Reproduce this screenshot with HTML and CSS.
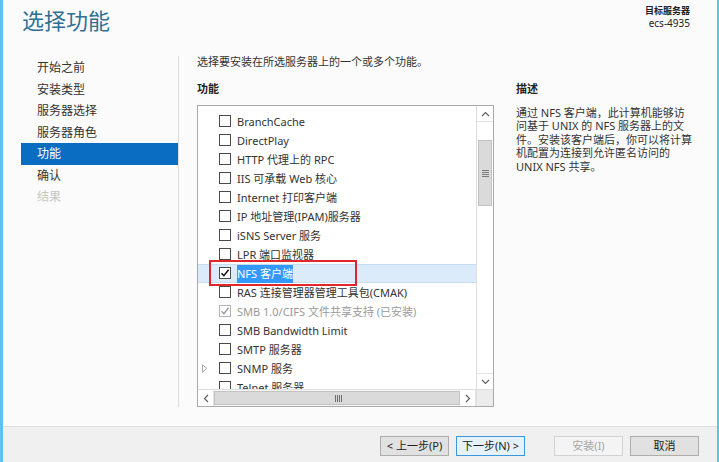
FILE: index.html
```html
<!DOCTYPE html>
<html lang="zh-CN">
<head>
<meta charset="utf-8">
<title>选择功能</title>
<link rel="stylesheet" href="styles.css">
</head>
<body>
<div class="window">
  <header class="header">
    <h1 class="title">选择功能</h1>
    <div class="target">
      <div class="target-label">目标服务器</div>
      <div class="target-name">ecs-4935</div>
    </div>
  </header>

  <div class="body">
    <nav class="nav">
      <div class="nav-item">开始之前</div>
      <div class="nav-item">安装类型</div>
      <div class="nav-item">服务器选择</div>
      <div class="nav-item">服务器角色</div>
      <div class="nav-item active">功能</div>
      <div class="nav-item">确认</div>
      <div class="nav-item disabled">结果</div>
    </nav>

    <main class="main">
      <p class="intro">选择要安装在所选服务器上的一个或多个功能。</p>
      <div class="columns">
        <div class="col-label">功能</div>
        <div class="col-label">描述</div>

        <div class="listbox">
          <div class="list-area">
            <div class="rows">
              <div class="row"><span class="exp"></span><span class="cb"></span><span class="lbl">BranchCache</span></div>
              <div class="row"><span class="exp"></span><span class="cb"></span><span class="lbl">DirectPlay</span></div>
              <div class="row"><span class="exp"></span><span class="cb"></span><span class="lbl">HTTP 代理上的 RPC</span></div>
              <div class="row"><span class="exp"></span><span class="cb"></span><span class="lbl">IIS 可承载 Web 核心</span></div>
              <div class="row"><span class="exp"></span><span class="cb"></span><span class="lbl">Internet 打印客户端</span></div>
              <div class="row"><span class="exp"></span><span class="cb"></span><span class="lbl">IP 地址管理(IPAM)服务器</span></div>
              <div class="row"><span class="exp"></span><span class="cb"></span><span class="lbl">iSNS Server 服务</span></div>
              <div class="row"><span class="exp"></span><span class="cb"></span><span class="lbl">LPR 端口监视器</span></div>
              <div class="row selected">
                <span class="exp"></span>
                <span class="cb"><svg width="10" height="10" viewBox="0 0 10 10"><path d="M1.5 5.2 L3.9 7.7 L8.6 1.8" fill="none" stroke="#111" stroke-width="1.5"/></svg></span>
                <span class="lbl"><span class="sel-text">NFS 客户端</span></span>
                <span class="redbox"></span>
              </div>
              <div class="row"><span class="exp"></span><span class="cb"></span><span class="lbl">RAS 连接管理器管理工具包(CMAK)</span></div>
              <div class="row installed">
                <span class="exp"></span>
                <span class="cb"><svg width="10" height="10" viewBox="0 0 10 10"><path d="M1.5 5.2 L3.9 7.7 L8.6 1.8" fill="none" stroke="#9a9a9a" stroke-width="1.4"/></svg></span>
                <span class="lbl">SMB 1.0/CIFS 文件共享支持 (已安装)</span>
              </div>
              <div class="row"><span class="exp"></span><span class="cb"></span><span class="lbl">SMB Bandwidth Limit</span></div>
              <div class="row"><span class="exp"></span><span class="cb"></span><span class="lbl">SMTP 服务器</span></div>
              <div class="row">
                <span class="exp"><svg width="6" height="9" viewBox="0 0 6 9"><path d="M0.5 0.8 L4.8 4.5 L0.5 8.2 Z" fill="none" stroke="#a8a8a8" stroke-width="1"/></svg></span>
                <span class="cb"></span><span class="lbl">SNMP 服务</span>
              </div>
              <div class="row"><span class="exp"></span><span class="cb"></span><span class="lbl">Telnet 服务器</span></div>
            </div>
            <div class="vscroll">
              <div class="sbtn"><svg width="9" height="6" viewBox="0 0 9 6"><path d="M1 5 L4.5 1.5 L8 5" fill="none" stroke="#606060" stroke-width="1.2"/></svg></div>
              <div class="vtrack">
                <div class="vthumb"><span class="grip-h"></span></div>
              </div>
              <div class="sbtn"><svg width="9" height="6" viewBox="0 0 9 6"><path d="M1 1 L4.5 4.5 L8 1" fill="none" stroke="#606060" stroke-width="1.2"/></svg></div>
            </div>
          </div>
          <div class="hscroll">
            <div class="sbtn h"><svg width="6" height="9" viewBox="0 0 6 9"><path d="M5 1 L1.5 4.5 L5 8" fill="none" stroke="#606060" stroke-width="1.2"/></svg></div>
            <div class="hthumb"><span class="grip-v"></span></div>
            <div class="sbtn h"><svg width="6" height="9" viewBox="0 0 6 9"><path d="M1 1 L4.5 4.5 L1 8" fill="none" stroke="#606060" stroke-width="1.2"/></svg></div>
            <div class="corner"></div>
          </div>
        </div>

        <div class="desc">通过 NFS 客户端，此计算机能够访<br>问基于 UNIX 的 NFS 服务器上的文<br>件。安装该客户端后，你可以将计算<br>机配置为连接到允许匿名访问的<br>UNIX NFS 共享。</div>
      </div>
    </main>
  </div>

  <footer class="footer">
    <button class="btn">&lt; 上一步(P)</button>
    <button class="btn focused">下一步(N) &gt;</button>
    <button class="btn disabled wide-gap">安装(I)</button>
    <button class="btn">取消</button>
  </footer>
</div>
</body>
</html>
```
FILE: styles.css
```css
* { box-sizing: border-box; }

html, body {
  margin: 0;
  padding: 0;
}

body {
  font-family: "Noto Sans", "Noto Sans CJK SC", sans-serif;
  color: #333;
  background: #fbfbfb;
}

.window {
  width: 719px;
  height: 462px;
  display: flex;
  flex-direction: column;
  border-left: 3px solid #5cc3ec;
  border-right: 2px solid #5cc3ec;
  background: #fbfbfb;
  overflow: hidden;
}

/* header */
.header {
  height: 56px;
  flex: none;
  display: flex;
  justify-content: space-between;
  align-items: flex-start;
  padding: 0 27px 0 19px;
}

.title {
  margin: 5px 0 0;
  font-family: "Noto Sans CJK SC", sans-serif;
  font-weight: 400;
  font-size: 22px;
  line-height: 28px;
  color: #2f7093;
}

.target {
  margin-top: 5px;
  text-align: right;
  color: #222;
}

.target-label {
  font-family: "Noto Sans CJK SC", sans-serif;
  font-size: 9px;
  font-weight: 700;
  line-height: 12px;
}

.target-name {
  font-size: 10px;
  line-height: 12px;
}

/* body */
.body {
  flex: 1;
  display: flex;
  padding-bottom: 19px;
}

.nav {
  width: 176px;
  flex: none;
  border-right: 1px solid #dcdcdc;
  padding-top: 1px;
  padding-left: 18px;
}

.nav-item {
  height: 21.5px;
  line-height: 21.5px;
  padding-left: 16px;
  font-size: 12px;
  color: #333;
}

.nav-item.active {
  background: #0a6dc2;
  color: #fff;
}

.nav-item.disabled {
  color: #c6c6c6;
}

.main {
  flex: 1;
  padding-left: 18px;
}

.intro {
  margin: 0;
  font-size: 11px;
  line-height: 12px;
  color: #333;
}

.columns {
  margin-top: 15px;
  display: grid;
  grid-template-columns: 297px 190px;
  grid-template-rows: 12px auto;
  column-gap: 22px;
  row-gap: 10px;
}

.col-label {
  font-size: 11px;
  font-weight: 700;
  line-height: 12px;
  color: #222;
}

/* list box */
.listbox {
  height: 302px;
  border: 1px solid #a9a9a9;
  background: #fff;
  display: flex;
  flex-direction: column;
}

.list-area {
  flex: 1;
  display: flex;
  min-height: 0;
}

.rows {
  flex: 1;
  padding-top: 5.5px;
  overflow: hidden;
}

.row {
  position: relative;
  height: 19px;
  display: flex;
  align-items: center;
  padding-left: 3px;
  font-size: 11px;
  color: #333;
  white-space: nowrap;
}

.exp {
  width: 18px;
  flex: none;
  display: flex;
  align-items: center;
  padding-left: 1px;
}

.cb {
  width: 12px;
  height: 12px;
  flex: none;
  border: 1px solid #4a4a4a;
  background: #fff;
  display: flex;
  align-items: center;
  justify-content: center;
}

.lbl {
  margin-left: 6px;
}

.row.selected {
  background: #dcebfa;
  border-top: 1px solid #c4ddf5;
  border-bottom: 1px solid #c4ddf5;
}

.sel-text {
  background: #3399ff;
  color: #fff;
  padding: 1px 0 2px;
}

.redbox {
  position: absolute;
  left: 11px;
  top: -5px;
  width: 148px;
  height: 26px;
  border: 2px solid #e3262b;
  pointer-events: none;
}

.row.installed {
  color: #9a9a9a;
}

.row.installed .cb {
  border-color: #b4b4b4;
}

/* scrollbars */
.vscroll {
  width: 17px;
  flex: none;
  display: flex;
  flex-direction: column;
  background: #f6f6f6;
  border-left: 1px solid #dedede;
}

.sbtn {
  height: 16px;
  flex: none;
  display: flex;
  align-items: center;
  justify-content: center;
  background: #fff;
  border-bottom: 1px solid #e4e4e4;
}

.vscroll .sbtn:last-child {
  border-bottom: none;
  border-top: 1px solid #e4e4e4;
}

.vtrack {
  flex: 1;
  padding-top: 18px;
  background: #fff;
}

.vthumb {
  height: 66px;
  margin: 0 1px;
  background: #dadada;
  border: 1px solid #c2c2c2;
  display: flex;
  align-items: center;
  justify-content: center;
}

.grip-h {
  width: 7px;
  height: 7px;
  background: repeating-linear-gradient(to bottom, #7a7a7a 0 1px, transparent 1px 2px);
}

.hscroll {
  height: 17px;
  flex: none;
  display: flex;
  border-top: 1px solid #dedede;
  background: #f6f6f6;
}

.sbtn.h {
  width: 16px;
  height: auto;
  border-bottom: none;
  border-right: 1px solid #e4e4e4;
}

.hthumb {
  flex: 1;
  margin: 1px 0;
  background: #dadada;
  border: 1px solid #c2c2c2;
  display: flex;
  align-items: center;
  justify-content: center;
}

.grip-v {
  width: 7px;
  height: 7px;
  margin-left: 2px;
  background: repeating-linear-gradient(to right, #6e6e6e 0 1px, transparent 1px 2px);
}

.corner {
  width: 17px;
  flex: none;
  background: #ececec;
  border-left: 1px solid #dedede;
}

/* description */
.desc {
  margin-top: 1px;
  font-size: 11px;
  line-height: 13.4px;
  color: #333;
  white-space: nowrap;
}

/* footer */
.footer {
  height: 36px;
  flex: none;
  background: #f0f0f0;
  border-top: 1px solid #dfdfdf;
  display: flex;
  justify-content: flex-end;
  align-items: flex-start;
  gap: 7px;
  padding: 9px 18px 0 0;
}

.btn {
  width: 69px;
  height: 20px;
  padding: 0;
  font-family: "Noto Sans", "Noto Sans CJK SC", sans-serif;
  font-size: 11px;
  line-height: 18px;
  color: #222;
  background: #e1e1e1;
  border: 1px solid #adadad;
}

.btn.focused {
  background: #e5f1fb;
  border-color: #3c97de;
}

.btn.disabled {
  background: #f4f4f4;
  border-color: #d2d2d2;
  color: #a6a6a6;
}

.btn.wide-gap {
  margin-left: 22px;
}
```
